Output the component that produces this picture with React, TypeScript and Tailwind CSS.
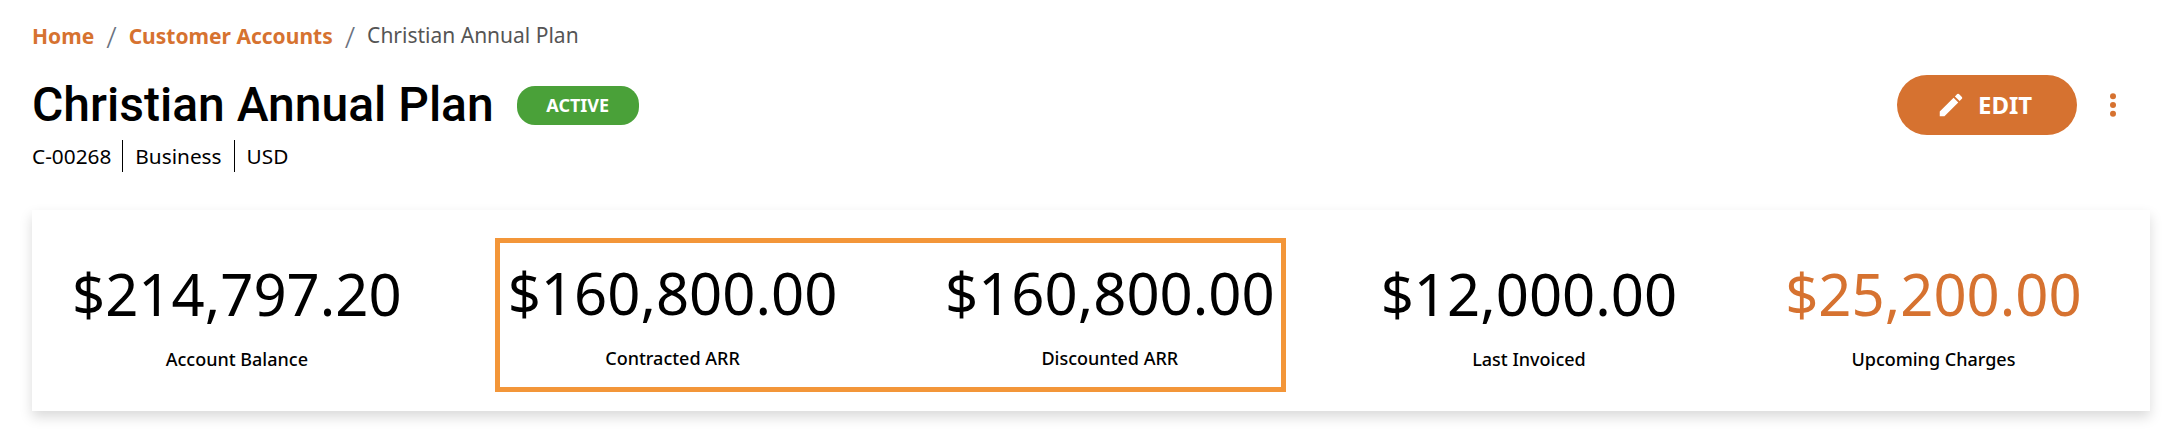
import React from "react";

const noto = "font-['Noto_Sans','Open_Sans',sans-serif]";

function Stat({ value, label, orange }: { value: string; label: string; orange?: boolean }) {
  return (
    <div className="flex flex-col items-center">
      <div className={`text-[58px] leading-[82px] ${orange ? "text-[#d67230]" : "text-black"}`}>{value}</div>
      <div className="mt-[12px] text-[18px] leading-[24px] font-medium text-black">{label}</div>
    </div>
  );
}

export default function App() {
  return (
    <div className={`w-[2174px] h-[436px] bg-white px-[32px] pt-[22px] overflow-hidden ${noto}`}>
      <nav className="flex items-center h-[30px] text-[21px]">
        <span className="font-bold text-[#d67230]">Home</span>
        <span className="mx-[12px] text-[#6b7280] text-[30px] leading-[30px] font-light">/</span>
        <span className="font-bold text-[#d67230]">Customer Accounts</span>
        <span className="mx-[12px] text-[#6b7280] text-[30px] leading-[30px] font-light">/</span>
        <span className="-mt-[3px] text-[#555555]">Christian Annual Plan</span>
      </nav>
      <div className="flex items-start justify-between mt-[23px]">
        <div>
          <div className="flex items-center h-[60px]">
            <h1 className="font-['Roboto',sans-serif] font-medium text-[48px] leading-[60px] text-black">Christian Annual Plan</h1>
            <span className="ml-[23px] flex h-[39px] w-[122px] items-center justify-center rounded-[18px] bg-[#4aa139] text-[18px] font-bold text-white">ACTIVE</span>
          </div>
          <div className="mt-[5px] flex items-center text-[20.8px] text-black leading-[32px]">
            <span className="pr-[11px] border-r border-black">C-00268</span>
            <span className="px-[12px] border-r border-black">Business</span>
            <span className="pl-[12px]">USD</span>
          </div>
        </div>
        <div className="flex items-center">
          <button className="flex h-[60px] w-[180px] items-center justify-start gap-[12px] rounded-full bg-[#d67230] pl-[39px] text-[24px] font-bold text-white">
            <svg viewBox="0 0 24 24" className="h-[30px] w-[30px] fill-white">
              <path d="M3 17.25V21h3.75L17.81 9.94l-3.75-3.75L3 17.25zM20.71 7.04a1 1 0 0 0 0-1.41l-2.34-2.34a1 1 0 0 0-1.41 0l-1.83 1.83 3.75 3.75 1.83-1.83z" />
            </svg>
            EDIT
          </button>
          <svg viewBox="0 0 24 24" className="ml-[21px] mr-[14px] h-[30px] w-[30px] fill-[#d67230]">
            <circle cx="12" cy="5" r="2.4" />
            <circle cx="12" cy="12" r="2.4" />
            <circle cx="12" cy="19" r="2.4" />
          </svg>
        </div>
      </div>
      <div className="mt-[38px] flex h-[201px] w-[2118px] items-center bg-white pl-[40px] pt-[2px] shadow-[0_6px_12px_rgba(0,0,0,0.15)]">
        <Stat value="$214,797.20" label="Account Balance" />
        <div className="ml-[93px] mt-[6px] flex h-[154px] w-[791px] items-center justify-between border-[5px] border-[#f39639] pl-[8px] pr-[6px] pb-[8px]">
          <Stat value="$160,800.00" label="Contracted ARR" />
          <Stat value="$160,800.00" label="Discounted ARR" />
        </div>
        <div className="ml-[95px]">
          <Stat value="$12,000.00" label="Last Invoiced" />
        </div>
        <div className="ml-[108px]">
          <Stat value="$25,200.00" label="Upcoming Charges" orange />
        </div>
      </div>
    </div>
  );
}
